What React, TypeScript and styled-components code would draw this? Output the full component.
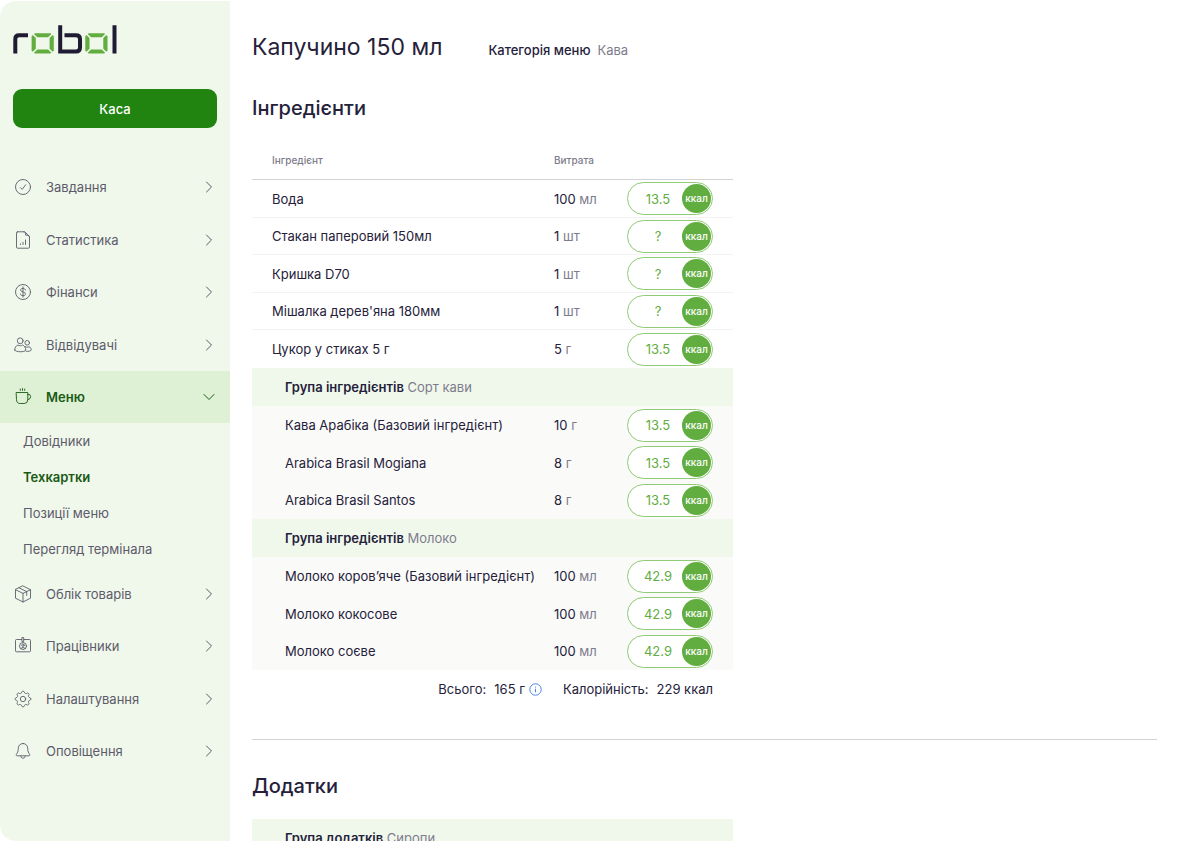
import React from "react";
import styled, { createGlobalStyle, css } from "styled-components";

const color = {
  ink: "#25213a",
  muted: "#7e7c8c",
  nav: "#5d5b6a",
  sidebar: "#f0f8ec",
  sidebarActive: "#def1d5",
  deepGreen: "#1a5a14",
  button: "#218410",
  leaf: "#61ad3f",
  leafLine: "#8fca75",
  subRow: "#fafaf9",
  line: "#d3d3d6",
  rowLine: "#f3f3f4",
  info: "#4a86e8",
};

const GlobalStyle = createGlobalStyle`
  *, *::before, *::after { box-sizing: border-box; }
  body {
    margin: 0;
    background: #fff;
    color: ${color.ink};
    font-family: Inter, "Liberation Sans", sans-serif;
    font-size: 13px;
    line-height: 20px;
  }
`;

const Shell = styled.div`
  display: flex;
  height: 100vh;
`;

const Sidebar = styled.aside`
  flex: 0 0 230px;
  margin-top: 1px;
  padding-top: 24px;
  background: ${color.sidebar};
  border-radius: 16px 0 0 16px;
  overflow: hidden;
`;

const LogoLink = styled.a`
  display: block;
  width: 104px;
  height: 29px;
  margin-left: 13px;
  svg { display: block; }
`;

const CashButton = styled.button`
  display: block;
  width: calc(100% - 26px);
  height: 39px;
  margin: 35px 13px 33px;
  border: 0;
  border-radius: 9px;
  background: ${color.button};
  color: #fff;
  font: 500 13px/20px Inter, "Liberation Sans", sans-serif;
  cursor: pointer;
`;

const List = styled.ul`
  margin: 0;
  padding: 0;
  list-style: none;
`;

const NavLink = styled.a<{ $active?: boolean }>`
  display: flex;
  align-items: center;
  gap: 14px;
  height: 52px;
  padding: 0 14px;
  color: ${(p) => (p.$active ? color.deepGreen : color.nav)};
  background: ${(p) => (p.$active ? color.sidebarActive : "transparent")};
  font-weight: ${(p) => (p.$active ? 600 : 400)};
  text-decoration: none;
  svg { flex: none; }
`;

const NavItem = styled.li`
  &:nth-child(even) > ${NavLink} { height: 53px; }
`;

const NavLabel = styled.span`
  flex: 1;
`;

const SubLink = styled.a<{ $active?: boolean }>`
  display: block;
  padding: 8px 23px;
  color: ${(p) => (p.$active ? color.deepGreen : color.nav)};
  font-weight: ${(p) => (p.$active ? 600 : 400)};
  text-decoration: none;
`;

const Main = styled.main`
  flex: 1;
  min-width: 0;
  padding: 32px 23px 0 22px;
  overflow-y: auto;
  scrollbar-width: none;
`;

const Head = styled.header`
  display: flex;
  align-items: baseline;
  gap: 46px;
`;

const Title = styled.h1`
  margin: 0;
  font-size: 23px;
  line-height: 30px;
  font-weight: 400;
`;

const Category = styled.p`
  display: flex;
  gap: 7px;
  margin: 0;
  strong { font-weight: 500; }
  span { color: ${color.muted}; }
`;

const SectionTitle = styled.h2`
  margin: 33px 0 20px;
  font-size: 20px;
  line-height: 26px;
  font-weight: 500;
`;

const Table = styled.table`
  width: 100%;
  max-width: 481px;
  table-layout: fixed;
  border-collapse: separate;
  border-spacing: 0;
  th, td { padding: 0; text-align: left; }
`;

const NameCol = styled.col``;
const AmountCol = styled.col`width: 73px;`;
const EnergyCol = styled.col`width: 106px;`;

const HeadCell = styled.th<{ $inset?: boolean }>`
  && { padding-left: ${(p) => (p.$inset ? "20px" : "0")}; }
  height: 39px;
  border-bottom: 1px solid ${color.line};
  color: ${color.muted};
  font-size: 10px;
  line-height: 16px;
  font-weight: 500;
`;

const Row = styled.tr<{ $nested?: boolean }>`
  height: 38px;
  ${(p) =>
    p.$nested
      ? css`
          background: ${color.subRow};
          &:nth-child(odd) { height: 37px; }
          && td:first-child { padding-left: 33px; }
        `
      : css`
          &:nth-child(even) { height: 37px; }
          && td:first-child { padding-left: 20px; }
          &:not(:last-child) td { border-bottom: 1px solid ${color.rowLine}; }
        `}
`;

const GroupRow = styled.tr`
  height: 38px;
  background: ${color.sidebar};
`;

const GroupCell = styled.th`
  && { padding-left: 33px; }
  font-weight: 400;
  color: ${color.muted};
  strong { color: ${color.ink}; font-weight: 600; }
`;

const Unit = styled.span`
  color: ${color.muted};
`;

const Energy = styled.div`
  display: flex;
  align-items: center;
  width: 86px;
  height: 33px;
  padding: 1px;
  border: 1px solid ${color.leafLine};
  border-radius: 17px;
  background: #fff;
  color: ${color.leaf};
`;

const EnergyValue = styled.span`
  flex: 1;
  padding-left: 5px;
  text-align: center;
`;

const EnergyUnit = styled.span`
  width: 29px;
  height: 29px;
  border-radius: 50%;
  background: ${color.leaf};
  color: #fff;
  font-size: 10px;
  line-height: 29px;
  font-weight: 500;
  text-align: center;
`;

const Totals = styled.div`
  display: flex;
  justify-content: flex-end;
  gap: 21px;
  padding: 9px 20px;
`;

const Total = styled.span`
  display: flex;
  align-items: center;
  gap: 8px;
`;

const TotalValue = styled.span`
  display: flex;
  align-items: center;
  gap: 4px;
`;

const InfoButton = styled.button`
  display: flex;
  padding: 0;
  border: 0;
  background: none;
  color: ${color.info};
  cursor: pointer;
`;

const Divider = styled.hr`
  height: 1px;
  margin: 31px 0 0;
  border: 0;
  background: ${color.line};
`;

function Logo() {
  const segments = (x: number) => (
    <g transform={`translate(${x} 8)`} fill={color.leaf}>
      <path d="M3.6.2h15.6l.9.8-3.3 3.200H6L2.700 1z" />
      <path d="M3.6 20.6h15.6l.9-.8-3.300-3.200H6l-3.300 3.200z" />
      <path d="M.3 3.400 1.400 2.100 4.500 5v10.800L1.400 18.700.3 17.400z" />
      <path d="M22.500 3.400 21.400 2.100 18.300 5v10.800l3.100 2.900 1.100-1.300z" />
    </g>
  );
  return (
    <svg width="104" height="29" viewBox="0 0 104 29" aria-hidden="true">
      <g fill="none" stroke="#1f1b33" strokeWidth="4">
        <path d="M2.3 28.5V14q0-3.8 3.8-3.8H15" />
        <path d="M47.2.3V26.5H63q4 0 4-4V14q0-3.8-4-3.8H51.5" />
        <path d="M101.5.3v28.2" />
      </g>
      {segments(18.3)}
      {segments(72)}
    </svg>
  );
}

/* Outline of a cog with eight rounded teeth, centred in an 18px box. */
const cogPath =
  Array.from({ length: 96 }, (_, i) => {
    const angle = (i / 96) * Math.PI * 2;
    const radius = 6.9 + 0.9 * Math.tanh(2 * Math.cos(8 * angle));
    const x = 9 + radius * Math.cos(angle);
    const y = 9 + radius * Math.sin(angle);
    return `${i ? "L" : "M"}${x.toFixed(2)} ${y.toFixed(2)}`;
  }).join("") + "z";

const icons: Record<string, React.ReactNode> = {
  task: (
    <>
      <circle cx="9" cy="9" r="7.5" />
      <path d="m6.4 9.6 1.8 1.8 3.4-4.6" />
    </>
  ),
  stats: (
    <>
      <path d="M3.500.8h7.200l4.800 4.500v10.900a1 1 0 0 1-1 1h-11a1 1 0 0 1-1-1V1.800a1 1 0 0 1 1-1z" />
      <path d="M9.700.8c1.700.3 2.100 1.400 1.900 3.300 2-.1 3.500.3 3.900 2.200" />
      <path d="M6.500 13.500v-.6M9 13.500v-2.200M11.500 13.500V9" />
    </>
  ),
  finance: (
    <>
      <circle cx="9" cy="9" r="7.5" />
      <path d="M11.400 7C11.200 5.900 10.200 5.400 9 5.400c-1.400 0-2.400.6-2.400 1.700C6.600 9.700 11.500 8.200 11.500 10.900c0 1.200-1.100 1.800-2.500 1.800s-2.500-.6-2.600-1.800M9 3.900v10.200" />
    </>
  ),
  visitors: (
    <>
      <circle cx="6.200" cy="4.800" r="2.900" />
      <path d="M.7 14c0-2.400 1.400-4.300 3.300-5 1.500 1 3 1 4.500 0 1.900.7 3.200 2.600 3.200 5 0 2.400-11 2.400-11 0z" />
      <circle cx="13.200" cy="6.800" r="2.300" />
      <path d="M11.400 10.700c1.200.7 2.400.7 3.600 0 1.400.5 2.200 1.700 2.200 3.100 0 1.300-2.700 1.900-5.100 1.400" />
    </>
  ),
  menu: (
    <>
      <path d="M2.500 4.500h11.300v7.300q0 3.700-3.700 3.700H6.200q-3.700 0-3.700-3.700z" />
      <path d="M13.800 6.300q2.900-.4 2.900 2.300t-2.900 3.200M6.300 2.400V1M8.500 2.400V.5M10.700 2.400V1" />
    </>
  ),
  goods: (
    <>
      <path d="M9 1 16.500 4.700v8.500L9 17l-7.500-3.800V4.700z" />
      <path d="M1.500 4.700 9 8.400l7.500-3.700M9 8.400V17M5.200 2.900l7.500 3.700v3.800" />
    </>
  ),
  staff: (
    <>
      <path d="M7.800 2.500H2.500a1 1 0 0 0-1 1v10.300a1 1 0 0 0 1 1h13a1 1 0 0 0 1-1V3.500a1 1 0 0 0-1-1h-5.300" />
      <path d="M8.300.500h1.400v4H8.300z" />
      <circle cx="9" cy="9" r="3.500" />
      <circle cx="9" cy="8.200" r="1.200" />
      <path d="M6.800 11.300q2.200-2 4.400 0" />
    </>
  ),
  settings: (
    <>
      <path d={cogPath} />
      <circle cx="9" cy="9" r="2.700" />
    </>
  ),
  alerts: (
    <>
      <path d="M9 1.500c-3 0-4.700 2.200-4.700 4.900 0 3.400-1 4.300-2 6.100-.3.700 0 1.300.8 1.300h11.800c.8 0 1.100-.6.800-1.300-1-1.800-2-2.700-2-6.100 0-2.700-1.700-4.900-4.700-4.900z" />
      <path d="M6.800 14c0 1.400.9 2.200 2.200 2.200s2.200-.8 2.200-2.200" />
    </>
  ),
};

function NavIcon({ name }: { name: string }) {
  return (
    <svg width="18" height="18" viewBox="0 0 18 18" fill="none" stroke="currentColor" strokeWidth="0.9" strokeLinecap="round" strokeLinejoin="round" aria-hidden="true">
      {icons[name]}
    </svg>
  );
}

function Chevron({ open }: { open?: boolean }) {
  return (
    <svg width="14" height="14" viewBox="0 0 14 14" fill="none" stroke="currentColor" strokeLinecap="round" strokeLinejoin="round" aria-hidden="true">
      <path d={open ? "M2 4.500 7 9.500l5-5" : "M4.500 2 9.500 7l-5 5"} />
    </svg>
  );
}

const nav = [
  { icon: "task", label: "Завдання" },
  { icon: "stats", label: "Статистика" },
  { icon: "finance", label: "Фінанси" },
  { icon: "visitors", label: "Відвідувачі" },
  {
    icon: "menu",
    label: "Меню",
    children: ["Довідники", "Техкартки", "Позиції меню", "Перегляд термінала"],
  },
  { icon: "goods", label: "Облік товарів" },
  { icon: "staff", label: "Працівники" },
  { icon: "settings", label: "Налаштування" },
  { icon: "alerts", label: "Оповіщення" },
];

type Item = [name: string, amount: number, unit: string, kcal: string];

const basics: Item[] = [
  ["Вода", 100, "мл", "13.5"],
  ["Стакан паперовий 150мл", 1, "шт", "?"],
  ["Кришка D70", 1, "шт", "?"],
  ["Мішалка дерев'яна 180мм", 1, "шт", "?"],
  ["Цукор у стиках 5 г", 5, "г", "13.5"],
];

const groups: { name: string; items: Item[] }[] = [
  {
    name: "Сорт кави",
    items: [
      ["Кава Арабіка (Базовий інгредієнт)", 10, "г", "13.5"],
      ["Arabica Brasil Mogiana", 8, "г", "13.5"],
      ["Arabica Brasil Santos", 8, "г", "13.5"],
    ],
  },
  {
    name: "Молоко",
    items: [
      ["Молоко коров’яче (Базовий інгредієнт)", 100, "мл", "42.9"],
      ["Молоко кокосове", 100, "мл", "42.9"],
      ["Молоко соєве", 100, "мл", "42.9"],
    ],
  },
];

function Ingredient({ item, nested }: { item: Item; nested?: boolean }) {
  const [name, amount, unit, kcal] = item;
  return (
    <Row $nested={nested}>
      <td>{name}</td>
      <td>
        {amount} <Unit>{unit}</Unit>
      </td>
      <td>
        <Energy>
          <EnergyValue>{kcal}</EnergyValue>
          <EnergyUnit>ккал</EnergyUnit>
        </Energy>
      </td>
    </Row>
  );
}

function Group({ kind, name }: { kind: string; name: string }) {
  return (
    <GroupRow>
      <GroupCell colSpan={3} scope="rowgroup">
        <strong>{kind}</strong> {name}
      </GroupCell>
    </GroupRow>
  );
}

function Columns() {
  return (
    <colgroup>
      <NameCol />
      <AmountCol />
      <EnergyCol />
    </colgroup>
  );
}

export default function App() {
  return (
    <>
      <GlobalStyle />
      <Shell>
        <Sidebar>
          <LogoLink href="#" aria-label="robol">
            <Logo />
          </LogoLink>
          <CashButton type="button">Каса</CashButton>
          <nav>
            <List>
              {nav.map(({ icon, label, children }) => (
                <NavItem key={label}>
                  <NavLink href="#" $active={!!children}>
                    <NavIcon name={icon} />
                    <NavLabel>{label}</NavLabel>
                    <Chevron open={!!children} />
                  </NavLink>
                  {children && (
                    <List>
                      {children.map((child) => (
                        <li key={child}>
                          <SubLink href="#" $active={child === "Техкартки"}>
                            {child}
                          </SubLink>
                        </li>
                      ))}
                    </List>
                  )}
                </NavItem>
              ))}
            </List>
          </nav>
        </Sidebar>
        <Main>
          <Head>
            <Title>Капучино 150 мл</Title>
            <Category>
              <strong>Категорія меню</strong>
              <span>Кава</span>
            </Category>
          </Head>
          <section>
            <SectionTitle>Інгредієнти</SectionTitle>
            <Table>
              <Columns />
              <thead>
                <tr>
                  <HeadCell $inset scope="col">Інгредієнт</HeadCell>
                  <HeadCell scope="col">Витрата</HeadCell>
                  <HeadCell scope="col" aria-label="Калорійність" />
                </tr>
              </thead>
              <tbody>
                {basics.map((item) => (
                  <Ingredient key={item[0]} item={item} />
                ))}
              </tbody>
              {groups.map((group) => (
                <tbody key={group.name}>
                  <Group kind="Група інгредієнтів" name={group.name} />
                  {group.items.map((item) => (
                    <Ingredient key={item[0]} item={item} nested />
                  ))}
                </tbody>
              ))}
              <tfoot>
                <tr>
                  <td colSpan={3}>
                    <Totals>
                      <Total>
                        <span>Всього:</span>
                        <TotalValue>
                          165 г
                          <InfoButton type="button" aria-label="Докладніше">
                            <svg width="13" height="13" viewBox="0 0 13 13" fill="none" stroke="currentColor" aria-hidden="true">
                              <circle cx="6.500" cy="6.500" r="5.700" />
                              <path d="M6.500 5.700v3.600M6.500 3.600v1" />
                            </svg>
                          </InfoButton>
                        </TotalValue>
                      </Total>
                      <Total>
                        <span>Калорійність:</span>
                        <span>229 ккал</span>
                      </Total>
                    </Totals>
                  </td>
                </tr>
              </tfoot>
            </Table>
          </section>
          <Divider />
          <section>
            <SectionTitle>Додатки</SectionTitle>
            <Table>
              <Columns />
              <tbody>
                <Group kind="Група додатків" name="Сиропи" />
              </tbody>
            </Table>
          </section>
        </Main>
      </Shell>
    </>
  );
}
